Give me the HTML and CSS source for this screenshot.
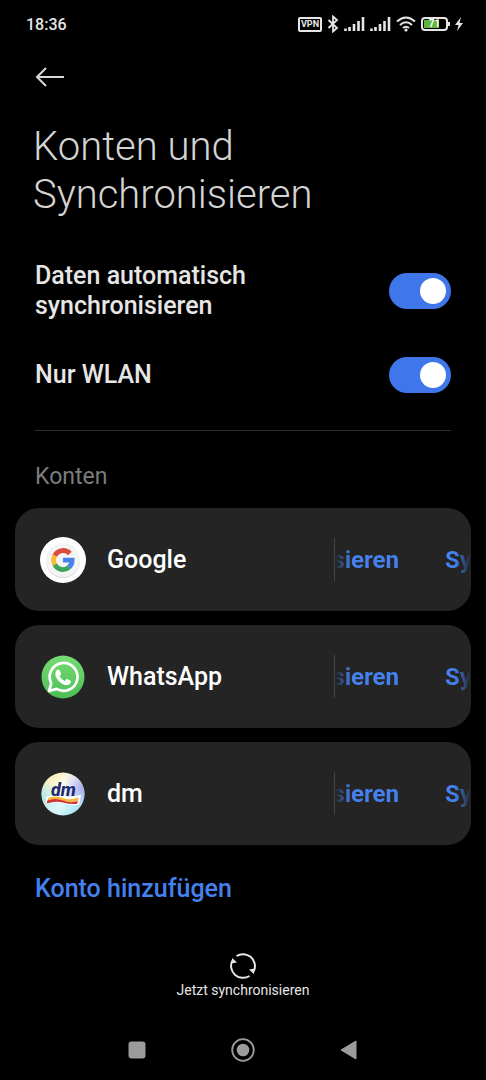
FILE: index.html
```html
<!DOCTYPE html>
<html lang="de">
<head>
<meta charset="utf-8">
<meta name="viewport" content="width=device-width, initial-scale=1">
<title>Konten und Synchronisieren</title>
<link rel="stylesheet" href="styles.css">
</head>
<body>
<div class="screen">
  <header class="status">
    <span class="clock">18:36</span>
    <div class="status-icons">
      <span class="vpn">VPN</span>
      <svg class="bluetooth" width="12" height="18" viewBox="0 0 12 18"><path d="M1.500 5 10 13 6 16.500V1.500L10 5 1.500 13"/></svg>
      <svg class="signal" width="21" height="14" viewBox="0 0 21 14"><path d="M1.500 14v-2.500M5.500 14v-4M10 14V7M14.500 14V4M19 14V0"/></svg>
      <svg class="signal" width="21" height="14" viewBox="0 0 21 14"><path d="M1.500 14v-2.500M5.500 14v-4M10 14V7M14.500 14V4M19 14V0"/></svg>
      <svg class="wifi" width="20" height="16" viewBox="0 0 20 16"><path d="M1 5.500Q10-2.500 19 5.500M4 9Q10 3.500 16 9M7 12Q10 9.500 13 12"/><circle cx="10" cy="14" r="1.600"/></svg>
      <span class="battery"><span class="battery-level">71</span></span>
      <svg class="bolt" width="8" height="14" viewBox="0 0 8 14"><path d="M6 0 0 8h3.500L2 14l6-8H4.500z"/></svg>
    </div>
  </header>

  <main class="content">
    <button class="back" type="button" aria-label="Zurück">
      <svg width="30" height="22" viewBox="0 0 30 22"><path d="M29 11H2M11 2 2 11l9 9"/></svg>
    </button>
    <h1 class="title">Konten und Synchronisieren</h1>

    <section class="settings">
      <div class="setting">
        <label class="setting-label" for="auto">Daten automatisch synchronisieren</label>
        <input class="toggle" id="auto" type="checkbox" role="switch" checked>
      </div>
      <div class="setting">
        <label class="setting-label" for="wlan">Nur WLAN</label>
        <input class="toggle" id="wlan" type="checkbox" role="switch" checked>
      </div>
    </section>

    <h2 class="section-title">Konten</h2>
    <ul class="accounts">
      <li class="account">
        <svg class="logo" width="46" height="46" viewBox="0 0 46 46">
          <circle cx="23" cy="23" r="23" fill="#fff"/>
          <circle cx="23" cy="24" r="17" fill="#d8d8d8"/>
          <circle cx="23" cy="23" r="17" fill="#f4f4f4"/>
          <g fill="none" stroke-width="4.800">
            <path d="M29.900 16.500A9.300 9.300 0 0 0 14.800 18.600" stroke="#db4d3f"/>
            <path d="M14.800 18.600A9.300 9.300 0 0 0 14.800 27.700" stroke="#f7bb2b"/>
            <path d="M14.800 27.700A9.300 9.300 0 0 0 28.900 30.400" stroke="#3ca456"/>
            <path d="M28.900 30.400A9.300 9.300 0 0 0 32.100 23.200H23" stroke="#4683ea"/>
          </g>
        </svg>
        <span class="name">Google</span>
        <button class="sync" type="button"><span class="track"><span class="lead">Synchronisieren</span><span>Synchronisieren</span></span></button>
      </li>
      <li class="account">
        <svg class="logo" width="46" height="46" viewBox="0 0 46 46">
          <defs><linearGradient id="green" x2="0" y2="1"><stop stop-color="#75dd73"/><stop offset="1" stop-color="#4fbd55"/></linearGradient></defs>
          <circle cx="23" cy="23" r="21.500" fill="url(#green)"/>
          <path d="M9 37 11.300 29.300A13.900 13.900 0 1 1 16.700 34.900Z" fill="none" stroke="#fff" stroke-width="2.700" stroke-linejoin="round"/>
          <path d="M17.200 16q1.200-1 2.200 0l1.800 4-1.500 2.200q1.600 3.400 5 4.800l2-2.200 4 1.900q.9 3.100-3.400 4.400C22 32 14 24 15.500 18.500Q16 16.800 17.200 16Z" fill="#fff"/>
        </svg>
        <span class="name">WhatsApp</span>
        <button class="sync" type="button"><span class="track"><span class="lead">Synchronisieren</span><span>Synchronisieren</span></span></button>
      </li>
      <li class="account">
        <svg class="logo" width="46" height="46" viewBox="0 0 46 46">
          <defs>
            <linearGradient id="sky" x1="0" y1="0" x2="1" y2="1"><stop stop-color="#f9e79a"/><stop offset=".25" stop-color="#fbf3cc"/><stop offset=".5" stop-color="#fff"/><stop offset=".75" stop-color="#bfeef7"/><stop offset="1" stop-color="#8fdcec"/></linearGradient>
            <radialGradient id="violet" cx="1" cy=".35" r=".5"><stop stop-color="#aaa5ea"/><stop offset="1" stop-color="#aaa5ea" stop-opacity="0"/></radialGradient>
            <radialGradient id="aqua" cx="0" cy=".65" r=".5"><stop stop-color="#a0e8f0"/><stop offset="1" stop-color="#a0e8f0" stop-opacity="0"/></radialGradient>
          </defs>
          <circle cx="23" cy="23" r="21.500" fill="url(#sky)"/>
          <circle cx="23" cy="23" r="21.500" fill="url(#violet)"/>
          <circle cx="23" cy="23" r="21.500" fill="url(#aqua)"/>
          <path d="M6 26Q14 23 22 25T41 24L39 34Q31 34.500 23 32T6 33.500Z" fill="#fff"/>
          <path d="M8 27Q15 24 23 27T39 26L37.500 30Q31 32 23 30T7 31Z" fill="#f5b540"/>
          <path d="M7.500 29.500Q15 26.500 23 29.500T38 30L37 33Q30 33.500 23 31.500T6.500 32.500Z" fill="#cf3532"/>
          <text class="dm-text" x="23.500" y="24.500" text-anchor="middle">dm</text>
        </svg>
        <span class="name">dm</span>
        <button class="sync" type="button"><span class="track"><span class="lead">Synchronisieren</span><span>Synchronisieren</span></span></button>
      </li>
    </ul>
    <button class="add" type="button">Konto hinzufügen</button>
  </main>

  <button class="sync-now" type="button">
    <svg width="28" height="28" viewBox="0 0 28 28"><path class="ring" d="M7.500 4A12 12 0 0 1 24.800 19.200M20.500 24A12 12 0 0 1 3.200 8.800"/><path class="heads" d="M3.300 6 8 10.400 2 11.500ZM24.700 22 20 17.600l6-1.100Z"/></svg>
    <span>Jetzt synchronisieren</span>
  </button>

  <nav class="navbar">
    <button type="button" aria-label="Letzte Apps"><svg width="24" height="24" viewBox="0 0 24 24"><rect x="3.500" y="3.500" width="17" height="17" rx="3"/></svg></button>
    <button type="button" aria-label="Startseite"><svg width="24" height="24" viewBox="0 0 24 24"><circle cx="12" cy="12" r="6.300"/><circle class="outline" cx="12" cy="12" r="10.800"/></svg></button>
    <button type="button" aria-label="Zurück"><svg width="24" height="24" viewBox="0 0 24 24"><path d="M4 12 19 3v18z" stroke="#9c9c9c" stroke-linejoin="round"/></svg></button>
  </nav>
</div>
</body>
</html>
```
FILE: styles.css
```css
* { box-sizing: border-box; }
body {
  margin: 0;
  background: #000;
  color: #e6e6e6;
  font-family: Roboto, sans-serif;
}
button {
  padding: 0;
  border: 0;
  background: none;
  color: inherit;
  font: inherit;
}
svg { display: block; }
.screen {
  display: flex;
  flex-direction: column;
  min-height: 100vh;
}

.status {
  display: flex;
  align-items: center;
  justify-content: space-between;
  height: 48px;
  padding: 0 23px 0 26px;
}
.clock { font-size: 16px; font-weight: 500; }
.status-icons { display: flex; align-items: center; gap: 5px; }
.vpn {
  width: 24px;
  border: 2px solid #e6e6e6;
  border-radius: 2px;
  font-size: 9px;
  font-weight: 700;
  line-height: 11px;
  text-align: center;
}
.bluetooth, .signal, .wifi { fill: none; stroke: #e6e6e6; stroke-width: 2; }
.bluetooth { stroke-width: 1.8; }
.signal { stroke-width: 2.6; }
.wifi circle { fill: #e6e6e6; stroke: none; }
.battery {
  position: relative;
  width: 27px;
  height: 14px;
  margin-right: 2px;
  padding: 1px;
  border: 2px solid #e6e6e6;
  border-radius: 4px;
}
.battery::after {
  content: "";
  position: absolute;
  top: 3px;
  right: -4px;
  width: 2px;
  height: 4px;
  background: #e6e6e6;
}
.battery-level {
  display: block;
  background: linear-gradient(90deg, #5eb53c 71%, #000 71%);
  color: #fff;
  font-size: 10px;
  font-weight: 700;
  line-height: 8px;
  text-align: center;
}
.bolt { fill: #e6e6e6; }

.content {
  display: flex;
  flex: 1;
  flex-direction: column;
  padding: 18px 15px 0;
}
.back { align-self: flex-start; margin-left: 20px; }
.back svg { fill: none; stroke: #d8d8d8; stroke-width: 2; }
.title {
  max-width: 340px;
  margin: 35px 18px 42px;
  color: #d4d4d4;
  font-size: 40px;
  font-weight: 300;
  line-height: 48px;
}
.settings {
  display: flex;
  flex-direction: column;
  gap: 36px;
  margin: 0 20px;
  padding-bottom: 37px;
  border-bottom: 1px solid #2c2c2c;
}
.setting { display: flex; align-items: center; justify-content: space-between; }
.setting-label {
  max-width: 240px;
  font-size: 25px;
  font-weight: 500;
  line-height: 30px;
}
.toggle {
  appearance: none;
  display: flex;
  flex: none;
  justify-content: flex-end;
  width: 62px;
  height: 36px;
  margin: 0;
  padding: 5px;
  border-radius: 18px;
  background: #3f76ea;
}
.toggle::before {
  content: "";
  width: 26px;
  height: 26px;
  border-radius: 50%;
  background: #fff;
}
.toggle:not(:checked) { justify-content: flex-start; background: #444; }

.section-title {
  margin: 31px 20px 16px;
  color: #7c7c7c;
  font-size: 23px;
  font-weight: 400;
  line-height: 30px;
}
.accounts {
  display: flex;
  flex-direction: column;
  gap: 14px;
  margin: 0;
  padding: 0;
  list-style: none;
}
.account {
  display: flex;
  align-items: center;
  height: 103px;
  padding-left: 25px;
  border-radius: 24px;
  background: #242424;
  overflow: hidden;
}
.name {
  flex: 1;
  margin-left: 21px;
  color: #fff;
  font-size: 25px;
  font-weight: 500;
}
.dm-text { fill: #1f2c70; font-size: 18px; font-style: italic; font-weight: 800; }
.sync {
  width: 137px;
  height: 43px;
  border-left: 1px solid #444;
  color: #4481ee;
  font-size: 24px;
  font-weight: 700;
  overflow: hidden;
}
.track {
  display: grid;
  grid-template-columns: 64px 1fr;
  column-gap: 46px;
  overflow: hidden;
  mask-image: linear-gradient(90deg, transparent, #000 16px calc(100% - 16px), transparent);
}
.lead { display: flex; justify-content: flex-end; }
.add {
  align-self: flex-start;
  margin: 29px 20px 0;
  color: #4481ee;
  font-size: 25px;
  font-weight: 500;
  line-height: 30px;
}

.sync-now {
  display: flex;
  flex-direction: column;
  align-items: center;
  align-self: center;
  margin-bottom: 20px;
  font-size: 14px;
  line-height: 20px;
}
.ring { fill: none; stroke: #e6e6e6; stroke-width: 2; }
.heads { fill: #e6e6e6; }
.navbar {
  display: flex;
  justify-content: center;
  gap: 82px;
  height: 60px;
  fill: #9c9c9c;
}
.navbar .outline { fill: none; stroke: #9c9c9c; stroke-width: 1.8; }
```
